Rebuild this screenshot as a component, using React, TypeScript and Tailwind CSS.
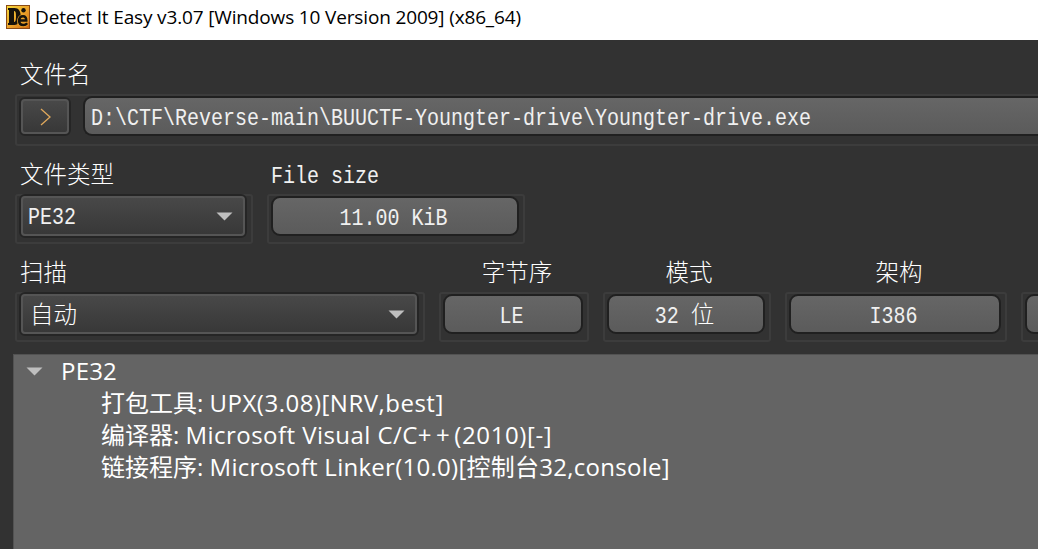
import type { ReactNode } from "react";

const songti = "font-['Liberation_Mono','Noto_Sans_CJK_SC',monospace]";
const yahei = "font-['Open_Sans','Noto_Sans_CJK_SC',sans-serif]";

function Mono({ children, className = "" }: { children: ReactNode; className?: string }) {
  return (
    <span
      className={`inline-block origin-center scale-y-[1.2] whitespace-pre text-[20px] leading-6 text-[#f0f0f0] ${className}`}
    >
      {children}
    </span>
  );
}

function Han({ children, className = "" }: { children: ReactNode; className?: string }) {
  return (
    <span className={`inline-block whitespace-pre text-[23.5px] font-light leading-6 ${className}`}>{children}</span>
  );
}

function Group({
  width,
  label,
  labelClass = "h-[48px]",
  children,
}: {
  width: string;
  label: ReactNode;
  labelClass?: string;
  children: ReactNode;
}) {
  return (
    <div className={`flex shrink-0 flex-col ${width}`}>
      <div className={`flex shrink-0 items-start ${labelClass}`}>{label}</div>
      <div className="h-[50px] shrink-0 rounded-[3px] border-2 border-[#3c3c3c] px-[2px]">{children}</div>
    </div>
  );
}

function Field({ children }: { children?: ReactNode }) {
  return (
    <div className="mr-[2px] flex h-10 items-center justify-center rounded-[9px] border-2 border-[#202020] bg-linear-to-b from-[#666666] to-[#5b5b5b] pt-[5px] pr-[3px]">
      {children}
    </div>
  );
}

function Combo({ children }: { children: ReactNode }) {
  return (
    <div className="-mt-[2px] mr-[2px] h-[44px] rounded-[6px] border-2 border-[#252525]">
      <div className="flex h-full items-center justify-between rounded-[4px] border-2 border-[#555555] bg-linear-to-b from-[#484848] to-[#383838] pr-[10px] pl-[5px]">
        {children}
        <Arrow />
      </div>
    </div>
  );
}

function Arrow() {
  return (
    <svg width="17" height="9" viewBox="0 0 17 9" className="shrink-0">
      <path d="M0.5 0.5h16L8.5 8.5z" fill="#bfbfbf" />
    </svg>
  );
}

function AppIcon() {
  return (
    <svg width="24" height="24" viewBox="0 0 24 24">
      <defs>
        <linearGradient id="gold" x1="0" y1="0" x2="1" y2="1">
          <stop offset="0" stopColor="#f6dc3c" />
          <stop offset="0.5" stopColor="#eda52a" />
          <stop offset="1" stopColor="#cf6413" />
        </linearGradient>
      </defs>
      <rect x="0.5" y="0.5" width="23" height="23" fill="url(#gold)" stroke="#8b4b16" />
      <path
        fillRule="evenodd"
        d="M2 3h6.500c4.200 0 6.200 3.400 6.200 8s-2.200 9-6.200 9H2v-2h1V5H2zM8 6v11c1.600 0 2-2 2-5.600S9.600 6 8 6z"
        fill="#17120b"
      />
      <circle cx="17.500" cy="5.200" r="2.200" fill="#17120b" />
      <path
        d="M13.500 15.500h6.800c0-3-1.300-4.300-3.200-4.300-2.400 0-4 1.900-4 4.600s1.700 4.300 4.300 4.300c1.700 0 2.900-.7 3.800-1.800"
        fill="none"
        stroke="#eda52a"
        strokeWidth="4"
      />
      <path
        d="M13.500 15.500h6.800c0-3-1.300-4.300-3.200-4.300-2.400 0-4 1.900-4 4.600s1.700 4.300 4.300 4.300c1.700 0 2.900-.7 3.800-1.800"
        fill="none"
        stroke="#17120b"
        strokeWidth="2.500"
      />
    </svg>
  );
}

export default function App() {
  return (
    <div className={`flex h-[549px] w-[1038px] flex-col overflow-hidden bg-[#323232] text-white ${songti}`}>
      <header className="flex h-10 shrink-0 items-start bg-white pt-[5px] pl-[6px] text-black">
        <AppIcon />
        <h1 className={`ml-[5px] text-[19px] leading-6 tracking-[-0.15px] whitespace-pre ${yahei}`}>
          Detect It Easy v3.07 [Windows 10 Version 2009] (x86_64)
        </h1>
      </header>

      <section className="h-[105px] shrink-0 pl-[15px]">
        <div className="flex h-[54px] items-start pt-[25px] pl-[5px]">
          <Han>文件名</Han>
        </div>
        <div className="flex h-[52px] rounded-l-[3px] border-2 border-r-0 border-[#3c3c3c] pl-[2px]">
          <button className="mt-px h-[39px] w-[52px] shrink-0 rounded-[6px] border-2 border-[#252525]">
            <span className="flex h-full items-center justify-center rounded-[4px] border-2 border-[#555555] bg-linear-to-b from-[#484848] to-[#383838]">
              <svg width="11" height="18" viewBox="0 0 11 18" fill="none">
                <path d="M1 1l9 8-9 8" stroke="#e0a85c" strokeWidth="1.300" />
              </svg>
            </span>
          </button>
          <div className="ml-3 flex h-10 flex-1 items-center rounded-l-[9px] border-2 border-r-0 border-[#202020] bg-linear-to-b from-[#666666] to-[#5b5b5b] pt-[5px] pl-[6px]">
            <Mono>D:\CTF\Reverse-main\BUUCTF-Youngter-drive\Youngter-drive.exe</Mono>
          </div>
        </div>
      </section>

      <section className="flex h-[99px] shrink-0 gap-[14px] pl-[15px]">
        <Group width="w-[238px]" label={<Han>文件类型</Han>} labelClass="h-[49px] pt-5 pl-[5px]">
          <Combo>
            <Mono className="pt-[3px]">PE32</Mono>
          </Combo>
        </Group>
        <Group width="w-[258px]" label={<Mono>File size</Mono>} labelClass="h-[49px] pt-5 pl-[4px]">
          <Field>
            <Mono>11.00 KiB</Mono>
          </Field>
        </Group>
      </section>

      <section className="flex h-[110px] shrink-0 gap-[14px] pl-[15px]">
        <Group width="w-[410px]" label={<Han>扫描</Han>} labelClass="h-[48px] pt-[19px] pl-[5px]">
          <Combo>
            <Han className="mt-[5px] pl-[2px]">自动</Han>
          </Combo>
        </Group>
        <Group width="w-[150px]" label={<Han>字节序</Han>} labelClass="h-[48px] justify-center pt-[19px] pl-[6px]">
          <Field>
            <Mono>LE</Mono>
          </Field>
        </Group>
        <Group width="w-[168px]" label={<Han>模式</Han>} labelClass="h-[48px] justify-center pt-[19px] pl-[4px]">
          <Field>
            <Mono>32 </Mono>
            <Han>位</Han>
          </Field>
        </Group>
        <Group width="w-[222px]" label={<Han>架构</Han>} labelClass="h-[48px] justify-center pt-[19px] pl-[6px]">
          <Field>
            <Mono>I386</Mono>
          </Field>
        </Group>
        <Group width="w-[150px]" label={null}>
          <Field />
        </Group>
      </section>

      <main
        className={`ml-[13px] flex-1 border-t border-l border-[#525252] bg-[#646464] text-[24px] leading-8 whitespace-pre ${yahei}`}
      >
        <div className="flex h-8 items-center pl-[12px]">
          <Arrow />
          <span className="ml-[18px] tracking-[0.2px]">PE32</span>
        </div>
        <ul className="pl-[87px]">
          <li className="h-8">
            打包工具: <span className="tracking-[0.5px]">UPX(3.08)[NRV,best]</span>
          </li>
          <li className="h-8">
            编译器: <span className="tracking-[0.45px]">Microsoft Visual C/C</span>
            <span className="tracking-[4.500px]">++</span>
            <span className="tracking-[0.6px]">(2010)[-]</span>
          </li>
          <li className="h-8">
            链接程序: <span className="tracking-[0.27px]">Microsoft Linker(10.0)[控制台32,console]</span>
          </li>
        </ul>
      </main>
    </div>
  );
}
